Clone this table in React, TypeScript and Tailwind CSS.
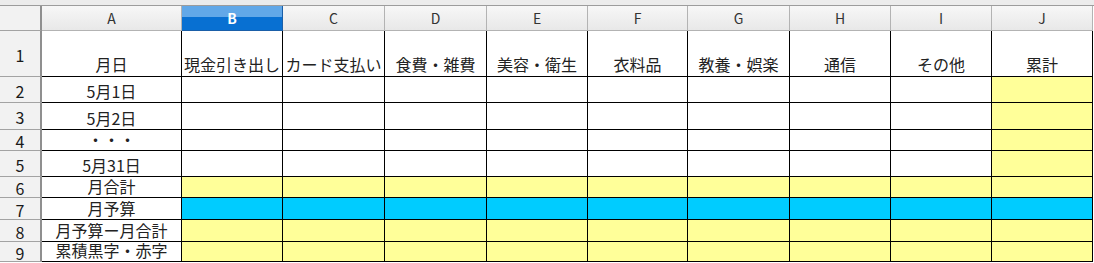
import clsx from 'clsx'

const columns = [
  { letter: 'A', width: 'w-[141px]', title: '月日' },
  { letter: 'B', width: 'w-[101px]', title: '現金引き出し' },
  { letter: 'C', width: 'w-[102px]', title: 'カード支払い' },
  { letter: 'D', width: 'w-[102px]', title: '食費・雑費' },
  { letter: 'E', width: 'w-[101px]', title: '美容・衛生' },
  { letter: 'F', width: 'w-[100px]', title: '衣料品' },
  { letter: 'G', width: 'w-[102px]', title: '教養・娯楽' },
  { letter: 'H', width: 'w-[101px]', title: '通信' },
  { letter: 'I', width: 'w-[101px]', title: 'その他' },
  { letter: 'J', width: 'w-[101px]', title: '累計' },
]

type Fill = 'white' | 'yellow' | 'blue'

// rows 2..9: label in column A, fill for B..I, fill for J
const rows: { num: number; height: string; label: string; fill: Fill; total: Fill }[] = [
  { num: 2, height: 'h-[26px]', label: '5月1日', fill: 'white', total: 'yellow' },
  { num: 3, height: 'h-[27px]', label: '5月2日', fill: 'white', total: 'yellow' },
  { num: 4, height: 'h-[21px]', label: '・・・', fill: 'white', total: 'yellow' },
  { num: 5, height: 'h-[26px]', label: '5月31日', fill: 'white', total: 'yellow' },
  { num: 6, height: 'h-[21px]', label: '月合計', fill: 'yellow', total: 'yellow' },
  { num: 7, height: 'h-[22px]', label: '月予算', fill: 'blue', total: 'blue' },
  { num: 8, height: 'h-[22px]', label: '月予算ー月合計', fill: 'yellow', total: 'yellow' },
  { num: 9, height: 'h-[20px]', label: '累積黒字・赤字', fill: 'yellow', total: 'yellow' },
]

const fillClass: Record<Fill, string> = {
  white: 'bg-white',
  yellow: 'bg-[#ffff99]',
  blue: 'bg-[#00ccff]',
}

const font = { fontFamily: '"Noto Sans CJK JP", "Liberation Sans", sans-serif' }

function RowHeader({ num, height }: { num: number | string; height: string }) {
  return (
    <div
      className={clsx(
        'flex w-[42px] shrink-0 items-center justify-center border-b border-r-2 border-b-[#a3a3a3] border-r-[#8f8f8f] bg-[#f2f2f2] pt-[2px] text-[16px] leading-none text-[#1a1a1a]',
        height,
      )}
    >
      {num}
    </div>
  )
}

export default function App() {
  return (
    <div className="h-[263px] w-[1094px] overflow-hidden bg-white" style={font}>
      <div className="h-[6px] border-b border-[#9c9c9c] bg-[#ececec]" />

      {/* column letters */}
      <div className="flex h-[25px]">
        <div className="w-[42px] shrink-0 border-b border-r-2 border-b-[#a3a3a3] border-r-[#8f8f8f] bg-[#f2f2f2]" />
        {columns.map((col, i) => (
          <div
            key={col.letter}
            className={clsx(
              'flex shrink-0 items-center justify-center border-b border-r text-[14px] leading-none',
              i === 0 ? 'w-[140px]' : col.width,
              col.letter === 'B'
                ? 'border-[#1a5fa8] bg-[linear-gradient(#62a8e8_0%,#62a8e8_45%,#0870d2_46%,#0870d2_100%)] font-bold text-white'
                : 'border-[#b3b3b3] bg-[linear-gradient(#f7f7f7,#e8e8e8)] text-[#333]',
            )}
          >
            {col.letter}
          </div>
        ))}
      </div>

      {/* row 1: titles */}
      <div className="flex h-[46px]">
        <RowHeader num={1} height="h-[46px]" />
        {columns.map((col, i) => (
          <div
            key={col.letter}
            className={clsx(
              'flex shrink-0 items-end justify-center whitespace-nowrap border-b border-r border-black pb-[3px] text-[16px] leading-[18px] text-[#222]',
              i === 0 ? 'w-[140px]' : col.width,
            )}
          >
            {col.title}
          </div>
        ))}
      </div>

      {rows.map((row) => (
        <div key={row.num} className={clsx('flex', row.height)}>
          <RowHeader num={row.num} height={row.height} />
          <div className="flex w-[140px] shrink-0 items-end justify-center whitespace-nowrap border-b border-r border-black bg-white pb-[2px] text-[16px] leading-[17px] text-[#222]">
            {row.label}
          </div>
          {columns.slice(1).map((col) => (
            <div
              key={col.letter}
              className={clsx(
                'shrink-0 border-b border-r border-black',
                col.width,
                fillClass[col.letter === 'J' ? row.total : row.fill],
              )}
            />
          ))}
        </div>
      ))}
    </div>
  )
}
